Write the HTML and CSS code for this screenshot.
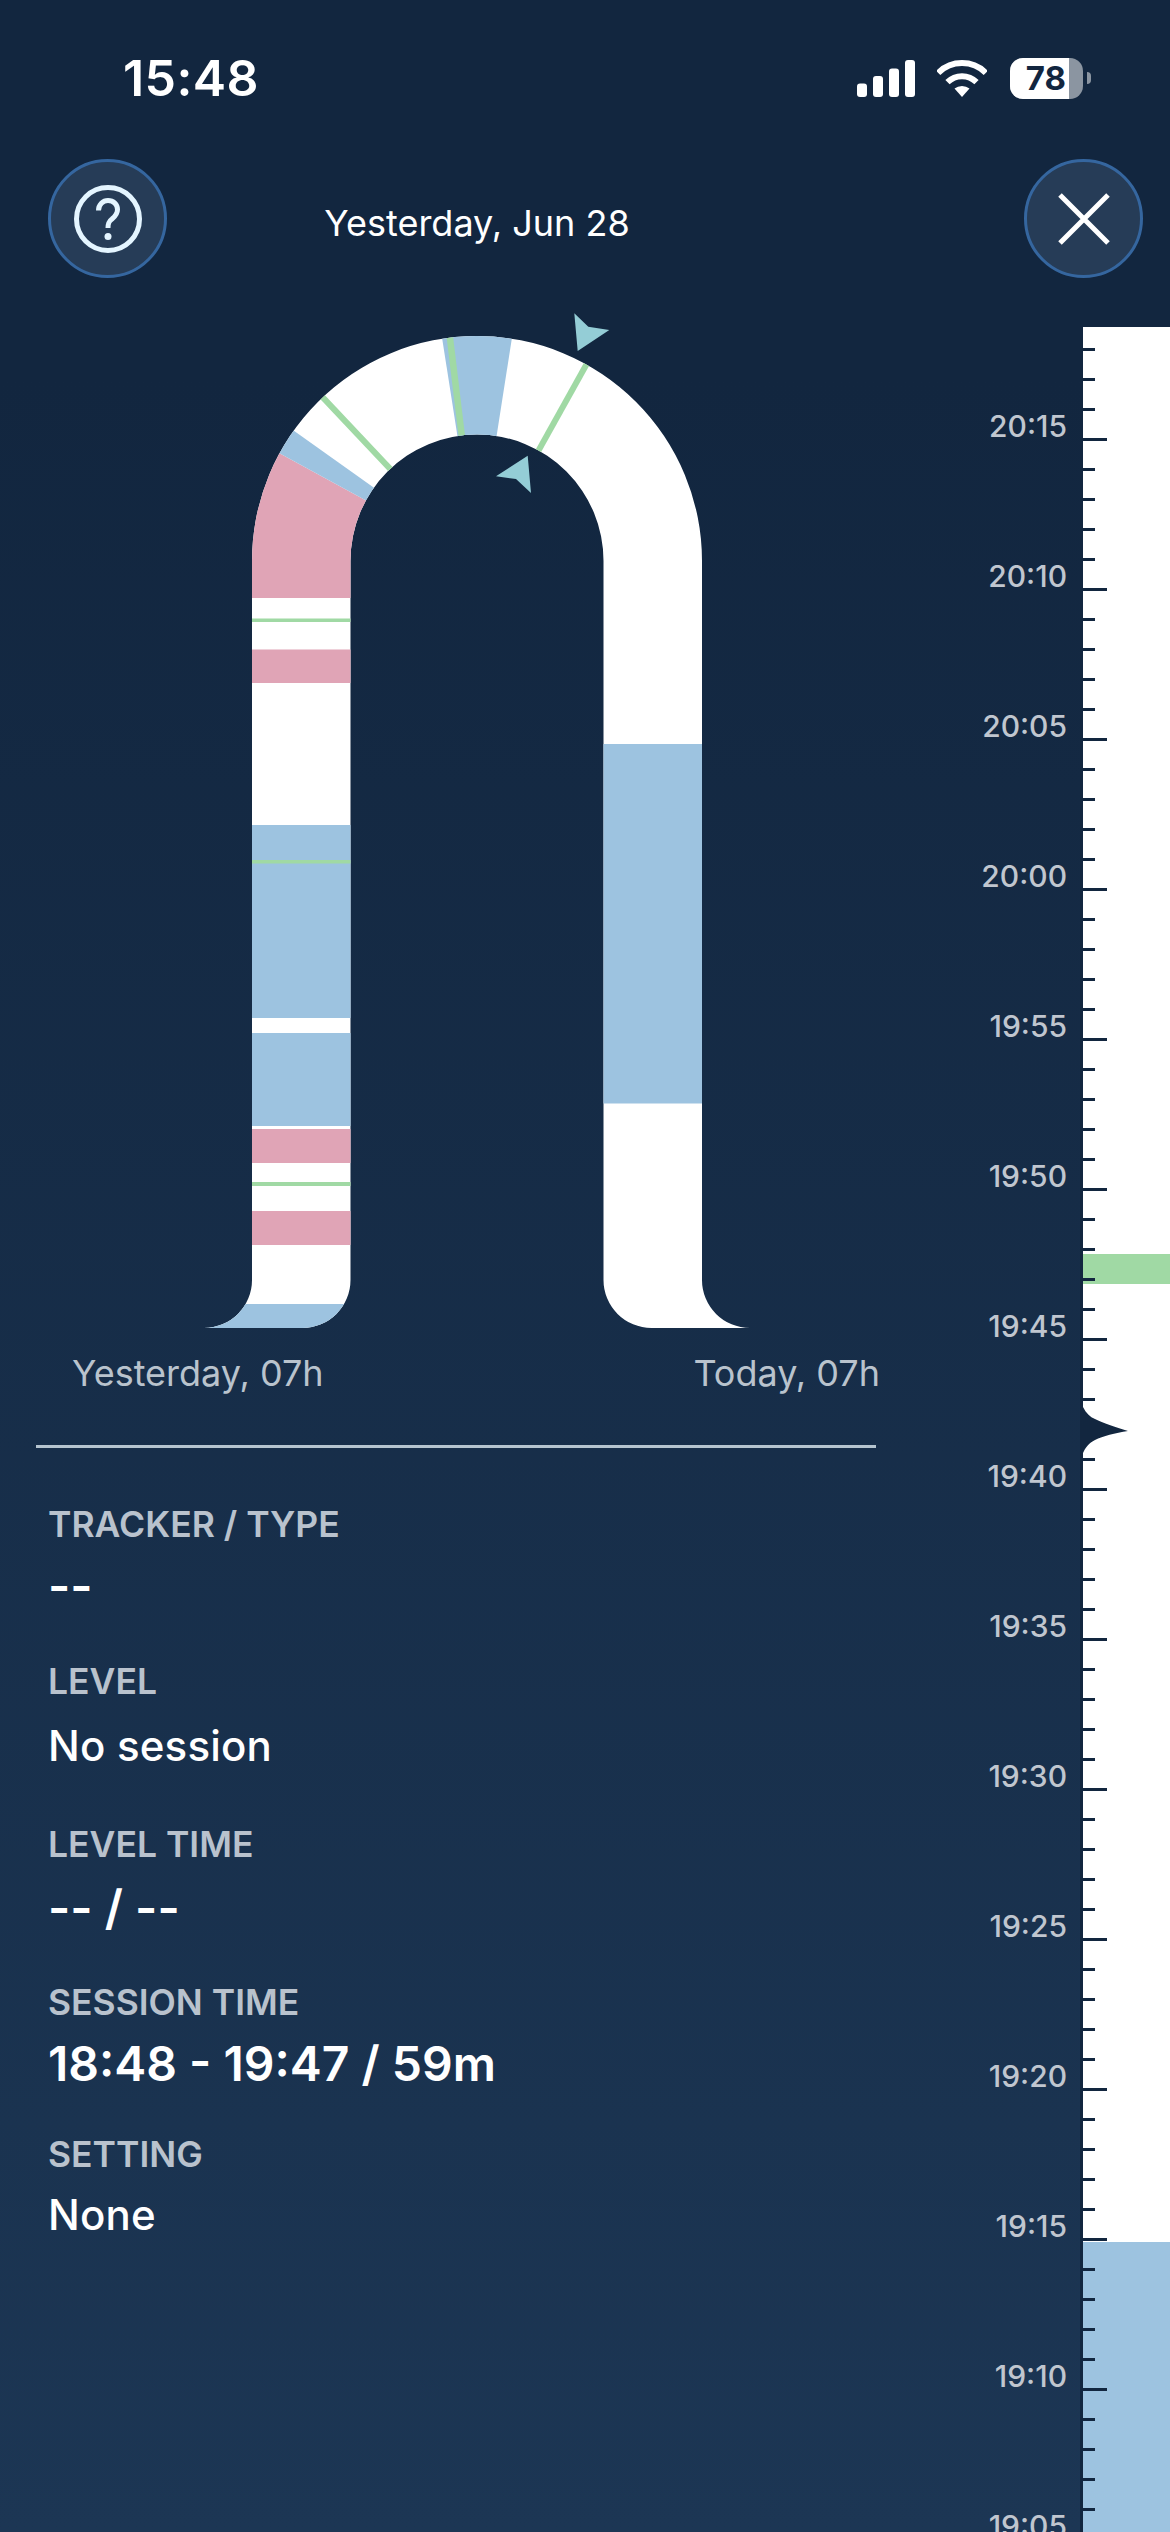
FILE: index.html
```html
<!DOCTYPE html>
<html>
<head>
    <meta charset="utf-8">
    <title>Session</title>
    <link rel="stylesheet" href="styles.css">
</head>
<body>
    <div class="page">
        <div class="statusbar">
            <div class="clock">15:48</div>
            <div class="status-icons">
                <svg class="signal" width="58" height="37" viewBox="0 0 58 37">
                    <rect x="0" y="23.5" width="10" height="13.5" rx="3"/>
                    <rect x="16" y="16" width="10" height="21" rx="3"/>
                    <rect x="32" y="8.5" width="10" height="28.5" rx="3"/>
                    <rect x="48" y="0" width="10" height="37" rx="3"/>
                </svg>
                <svg class="wifi" width="50" height="37" viewBox="0 0 50 37">
                    <path d="M1.2 12.9 A33.7 33.7 0 0 1 48.8 12.9" />
                    <path d="M10.5 22.2 A20.5 20.5 0 0 1 39.5 22.2" />
                    <polygon class="wifi-dot" points="25,37 17.5,28.5 21,26.8 25,26 29,26.8 32.5,28.5"/>
                </svg>
                <div class="battery"><div class="battery-level">78</div></div>
                <div class="battery-nub"></div>
            </div>
        </div>

        <div class="nav">
            <div class="round-btn help">
                <svg width="72" height="72" viewBox="0 0 72 72">
                    <circle cx="36" cy="36" r="31.5"/>
                    <path d="M26.5 27.5 C26.5 21.5 31 17.5 36 17.5 C41.5 17.5 45.5 21.5 45.5 26.5 C45.5 31 43 33.5 40 36 C37 38.3 36 40 36 45"/>
                    <circle class="dot" cx="36" cy="53.5" r="3.5"/>
                </svg>
            </div>
            <div class="nav-title">Yesterday, Jun 28</div>
            <div class="round-btn close">
                <svg width="52" height="52" viewBox="0 0 52 52">
                    <path d="M2 2 L50 50 M50 2 L2 50"/>
                </svg>
            </div>
        </div>

        <div class="content">
            <div class="main">
                <svg class="chart" width="980" height="1062" viewBox="0 278 980 1062">
                    <defs>
                        <clipPath id="track">
                            <path d="M204 1328 A48 48 0 0 0 252 1280 V561 A225 225 0 0 1 702 561 V1280 A48 48 0 0 0 750 1328 H651.5 A48 48 0 0 1 603.5 1280 V561 A126.5 126.5 0 0 0 350.5 561 V1280 A48 48 0 0 1 302.5 1328 Z"/>
                        </clipPath>
                    </defs>
                    <g clip-path="url(#track)">
                        <rect class="none" x="190" y="320" width="570" height="1010"/>

                        <!-- left leg -->
                        <polygon class="pink" points="477,561 213.6,417.4 150,417 150,561"/>
                        <rect class="pink" x="190" y="561" width="170" height="37"/>
                        <rect class="green" x="190" y="618.5" width="170" height="3.5"/>
                        <rect class="pink" x="190" y="649.5" width="170" height="33.5"/>
                        <rect class="blue" x="190" y="825" width="170" height="193"/>
                        <rect class="green" x="190" y="860" width="170" height="3.5"/>
                        <rect class="blue" x="190" y="1033" width="170" height="93"/>
                        <rect class="pink" x="190" y="1129" width="170" height="34"/>
                        <rect class="green" x="190" y="1182" width="170" height="4"/>
                        <rect class="pink" x="190" y="1211" width="170" height="34"/>
                        <rect class="blue" x="190" y="1304" width="170" height="24"/>

                        <!-- arc -->
                        <polygon class="blue" points="477,561 213.6,417.4 232.5,387.2"/>
                        <rect class="green" x="474" y="320" width="6" height="241" transform="rotate(-43.3 477 561)"/>
                        <polygon class="blue" points="477,561 430.6,264.6 523.4,264.6"/>
                        <rect class="green" x="473.7" y="320" width="6.5" height="241" transform="rotate(-6.9 477 561)"/>
                        <rect class="green" x="474" y="320" width="6" height="241" transform="rotate(29.1 477 561)"/>

                        <!-- right leg -->
                        <rect class="blue" x="595" y="744" width="115" height="359.5"/>
                    </g>
                    <polygon class="marker" points="574.3,313.3 588.3,326.7 609.3,330 577.7,351"/>
                    <polygon class="marker" points="527.7,455.7 531,493 516,479 496,476.3"/>
                </svg>

                <div class="chart-labels">
                    <span>Yesterday, 07h</span>
                    <span>Today, 07h</span>
                </div>
                <div class="divider"></div>

                <div class="info">
                    <div class="info-item">
                        <div class="info-label">TRACKER / TYPE</div>
                        <div class="info-value large">--</div>
                    </div>
                    <div class="info-item">
                        <div class="info-label">LEVEL</div>
                        <div class="info-value">No session</div>
                    </div>
                    <div class="info-item">
                        <div class="info-label">LEVEL TIME</div>
                        <div class="info-value large">-- / --</div>
                    </div>
                    <div class="info-item">
                        <div class="info-label">SESSION TIME</div>
                        <div class="info-value large">18:48 - 19:47 / 59m</div>
                    </div>
                    <div class="info-item">
                        <div class="info-label">SETTING</div>
                        <div class="info-value">None</div>
                    </div>
                </div>
            </div>

            <div class="times">
                <div>20:15</div>
                <div>20:10</div>
                <div>20:05</div>
                <div>20:00</div>
                <div>19:55</div>
                <div>19:50</div>
                <div>19:45</div>
                <div>19:40</div>
                <div>19:35</div>
                <div>19:30</div>
                <div>19:25</div>
                <div>19:20</div>
                <div>19:15</div>
                <div>19:10</div>
                <div>19:05</div>
            </div>

            <div class="ruler">
                <div class="seg seg-top"></div>
                <div class="seg seg-green"></div>
                <div class="seg seg-white"></div>
                <div class="seg seg-blue"></div>
                <div class="ticks"></div>
                <svg class="notch" width="46" height="46" viewBox="0 0 46 46">
                    <path d="M0 0 C3 6 7 10 12 12 C20 16 32 20 45 24 C32 26 20 29 12 33 C6 36 2 41 0 46 Z"/>
                </svg>
            </div>
        </div>
    </div>
</body>
</html>
```

FILE: styles.css
```css
html, body {
    margin: 0;
    padding: 0;
}

.page {
    width: 1170px;
    height: 2532px;
    overflow: hidden;
    background: linear-gradient(to bottom, #12263f 0%, #12263f 15%, #1c3654 100%);
    font-family: Inter, "Noto Sans", sans-serif;
    color: #fff;
}

/* status bar */
.statusbar {
    height: 159px;
    display: flex;
    align-items: center;
    justify-content: space-between;
    box-sizing: border-box;
    padding: 0 79px 3px 123px;
}

.clock {
    font-size: 50px;
    font-weight: 600;
    line-height: 40px;
    letter-spacing: 0.4px;
}

.status-icons {
    display: flex;
    align-items: center;
}

.signal {
    fill: #fff;
    margin-right: 22px;
}

.wifi {
    margin-right: 23px;
}

.wifi path {
    fill: none;
    stroke: #fff;
    stroke-width: 6;
}

.wifi-dot {
    fill: #fff;
}

.battery {
    width: 73px;
    height: 41px;
    border-radius: 13px;
    overflow: hidden;
    background-color: #8b95a1;
}

.battery-level {
    width: 59px;
    height: 41px;
    background-color: #fff;
    color: #12263f;
    font-size: 33px;
    font-weight: 700;
    line-height: 41px;
    text-align: right;
    padding-right: 3px;
    box-sizing: border-box;
}

.battery-nub {
    width: 4px;
    height: 12px;
    margin-left: 4px;
    background-color: #8b95a1;
    border-radius: 0 6px 6px 0;
}

/* top row */
.nav {
    height: 119px;
    display: flex;
    align-items: center;
    padding: 0 27px 0 48px;
}

.round-btn {
    width: 119px;
    height: 119px;
    flex: none;
    box-sizing: border-box;
    border: 3px solid #35669f;
    border-radius: 50%;
    background-color: #263c57;
    display: flex;
    align-items: center;
    justify-content: center;
}

.round-btn svg {
    fill: none;
    stroke: #e4f5ff;
    stroke-width: 5;
}

.round-btn .dot {
    fill: #e4f5ff;
    stroke: none;
}

.close {
    margin-left: auto;
}

.close svg {
    stroke: #fff;
}

.nav-title {
    width: 620px;
    text-align: center;
    font-size: 36px;
    padding-top: 8px;
}

/* chart + details */
.content {
    height: 2254px;
    display: flex;
    overflow: hidden;
}

.main {
    width: 980px;
    flex: none;
}

.chart {
    display: block;
    overflow: visible;
}

.none { fill: #fff; }
.blue { fill: #9dc3e0; }
.pink { fill: #e0a4b6; }
.green { fill: #a0d9a4; }
.marker { fill: #94cdd6; }

.chart-labels {
    display: flex;
    justify-content: space-between;
    width: 808px;
    margin-left: 72px;
    padding-top: 11px;
    font-size: 36px;
    line-height: 44px;
    color: #b9c3cd;
}

.divider {
    width: 840px;
    height: 3px;
    margin: 50px 0 0 36px;
    background-color: #b5c4cf;
}

.info {
    padding: 55px 0 0 48px;
}

.info-item {
    margin-bottom: 47px;
}

.info-item:nth-child(2) {
    margin-bottom: 50px;
}

.info-item:nth-child(2) .info-value {
    margin-top: 15px;
}

.info-item:nth-child(3) {
    margin-bottom: 46px;
}

.info-item:nth-child(3) .info-value {
    margin-top: 14px;
}

.info-item:nth-child(4) {
    margin-bottom: 42px;
}

.info-item:nth-child(5) .info-value {
    margin-top: 11px;
}

.info-label {
    font-size: 35.5px;
    font-weight: 600;
    line-height: 44px;
    color: #b9c2cd;
}

.info-value {
    font-size: 42px;
    font-weight: 500;
    letter-spacing: 0.2px;
    line-height: 54px;
    margin-top: 12px;
}

.info-value.large {
    font-size: 48px;
    font-weight: 600;
    letter-spacing: 0;
}

/* timeline */
.times {
    width: 87px;
    flex: none;
    padding-top: 73px;
    margin-right: 13px;
    font-size: 30px;
    font-weight: 500;
    text-align: right;
    color: #c0c6cf;
}

.times div {
    height: 150px;
    line-height: 150px;
    white-space: nowrap;
}

.ruler {
    position: relative;
    flex: 1;
    margin-top: 49px;
    border-left: 3px solid #12263f;
    display: flex;
    flex-direction: column;
}

.seg-top {
    height: 927px;
    background-color: #fff;
}

.seg-green {
    height: 30px;
    background-color: #a0d9a4;
}

.seg-white {
    height: 958px;
    background-color: #fff;
}

.seg-blue {
    flex: 1;
    background-color: #9dc3e0;
}

.ticks {
    position: absolute;
    top: 0;
    left: 0;
    width: 24px;
    bottom: 0;
    background-image:
        linear-gradient(to bottom, #12263f 3px, transparent 3px),
        linear-gradient(to bottom, #12263f 3px, transparent 3px);
    background-size: 12px 30px, 24px 150px;
    background-position: 0 21px, 0 111px;
    background-repeat: repeat-y;
}

.notch {
    position: absolute;
    left: 0;
    top: 1080px;
    fill: #12263f;
}
```
